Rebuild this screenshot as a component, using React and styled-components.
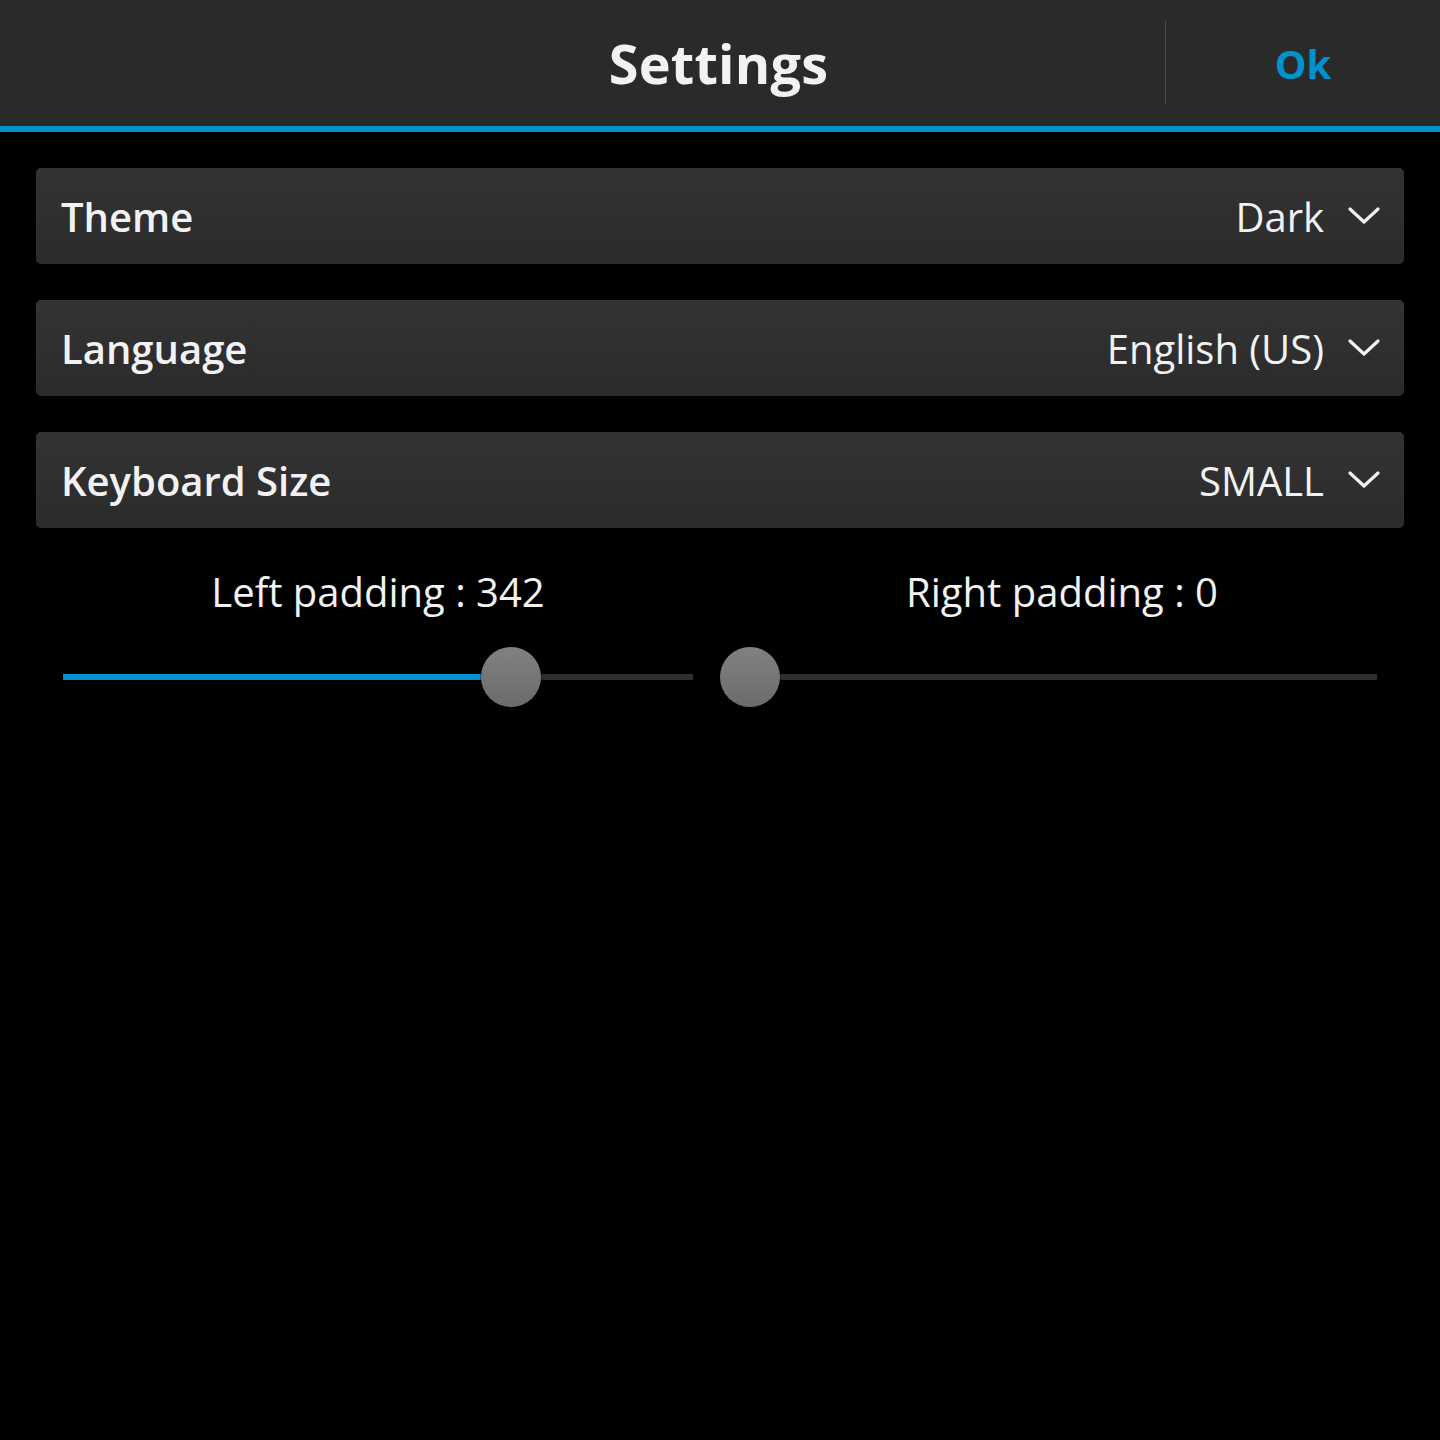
import React from "react";
import styled, { createGlobalStyle } from "styled-components";

const Global = createGlobalStyle`
  html, body {
    margin: 0;
    padding: 0;
    background: #000;
  }
  body {
    font-family: "Open Sans", "Noto Sans", sans-serif;
    color: #f2f2f2;
  }
`;

const Page = styled.div`
  width: 1440px;
  min-height: 1440px;
  background: #000;
`;

const Header = styled.div`
  height: 126px;
  background: #2a2a2a;
  border-bottom: 6px solid #0092cc;
  display: grid;
  grid-template-columns: 1165px 1px 1fr;
  align-items: center;
`;

const Title = styled.h1`
  margin: 0;
  padding-left: 272px;
  text-align: center;
  font-size: 54px;
  font-weight: 700;
  color: #f2f2f2;
  letter-spacing: 0.2px;
`;

const Divider = styled.div`
  height: 84px;
  background: #4a4a4a;
`;

const OkButton = styled.button`
  background: none;
  border: none;
  font-family: inherit;
  font-size: 40px;
  font-weight: 700;
  color: #0092cc;
  text-align: center;
  padding: 0;
  cursor: pointer;
`;

const Content = styled.div`
  padding: 36px 36px 0;
  display: flex;
  flex-direction: column;
  gap: 36px;
`;

const Row = styled.div`
  height: 96px;
  border-radius: 5px;
  background: linear-gradient(#333333, #2b2b2b);
  display: flex;
  align-items: center;
  justify-content: space-between;
  padding: 0 24px 0 25px;
`;

const Label = styled.span`
  font-size: 40px;
  font-weight: 600;
  color: #f2f2f2;
`;

const Value = styled.span`
  display: flex;
  align-items: center;
  gap: 24px;
  font-size: 40px;
  font-weight: 400;
  color: #f2f2f2;
`;

const Sliders = styled.div`
  display: grid;
  grid-template-columns: 1fr 1fr;
  margin-top: 3px;
`;

const SliderBlock = styled.div`
  display: flex;
  flex-direction: column;
  align-items: stretch;
`;

const SliderLabel = styled.div`
  text-align: center;
  font-size: 40px;
  font-weight: 400;
  color: #f2f2f2;
  height: 50px;
  line-height: 50px;
`;

const TrackArea = styled.div`
  position: relative;
  height: 60px;
  margin: 30px ${(p) => p.$right}px 0 ${(p) => p.$left}px;
  display: flex;
  align-items: center;
`;

const Track = styled.div`
  width: 100%;
  height: 6px;
  background: #2e2e2e;
`;

const Fill = styled.div`
  position: absolute;
  left: 0;
  top: 27px;
  height: 6px;
  background: #0092cc;
`;

const Thumb = styled.div`
  position: absolute;
  top: 0;
  width: 60px;
  height: 60px;
  margin-left: -30px;
  border-radius: 50%;
  background: linear-gradient(#818181, #6b6b6b);
  box-shadow: 0 0 0 1px rgba(0, 0, 0, 0.4);
`;

const Chevron = () => (
  <svg width="32" height="18" viewBox="0 0 32 18" fill="none">
    <path d="M2 2 L16 15 L30 2" stroke="#f2f2f2" strokeWidth="3.2" strokeLinecap="round" strokeLinejoin="round" />
  </svg>
);

const settings = [
  { label: "Theme", value: "Dark" },
  { label: "Language", value: "English (US)" },
  { label: "Keyboard Size", value: "SMALL" },
];

function Slider({ label, left, right, pos, fill }) {
  return (
    <SliderBlock>
      <SliderLabel>{label}</SliderLabel>
      <TrackArea $left={left} $right={right}>
        <Track />
        {fill && <Fill style={{ width: pos }} />}
        <Thumb style={{ left: pos }} />
      </TrackArea>
    </SliderBlock>
  );
}

export default function App() {
  return (
    <Page>
      <Global />
      <Header>
        <Title>Settings</Title>
        <Divider />
        <OkButton>Ok</OkButton>
      </Header>
      <Content>
        {settings.map((s) => (
          <Row key={s.label}>
            <Label>{s.label}</Label>
            <Value>
              {s.value}
              <Chevron />
            </Value>
          </Row>
        ))}
        <Sliders>
          <Slider label="Left padding : 342" left={27} right={27} pos={448} fill />
          <Slider label="Right padding : 0" left={30} right={27} pos={0} />
        </Sliders>
      </Content>
    </Page>
  );
}
